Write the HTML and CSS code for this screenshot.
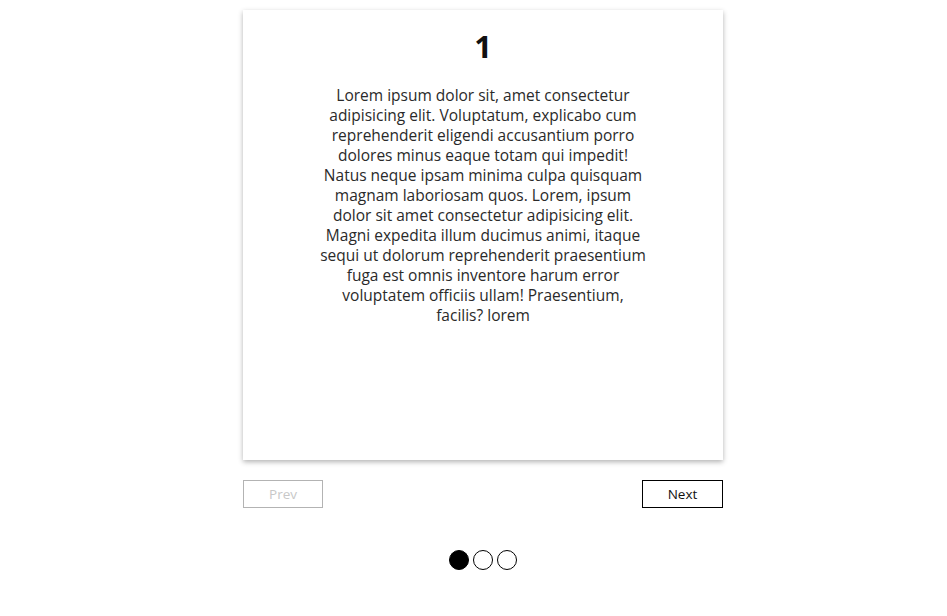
FILE: index.html
```html
<!DOCTYPE html>
<html>
<head>
<meta charset="utf-8">
<link rel="stylesheet" href="styles.css">
</head>
<body>
<div class="wrap">
  <div class="card">
    <h1 class="num">1</h1>
    <p class="text">Lorem ipsum dolor sit, amet consectetur adipisicing elit. Voluptatum, explicabo cum reprehenderit eligendi accusantium porro dolores minus eaque totam qui impedit! Natus neque ipsam minima culpa quisquam magnam laboriosam quos. Lorem, ipsum dolor sit amet consectetur adipisicing elit. Magni expedita illum ducimus animi, itaque sequi ut dolorum reprehenderit praesentium fuga est omnis inventore harum error voluptatem officiis ullam! Praesentium, facilis? lorem</p>
  </div>
  <div class="nav">
    <button class="btn btn-disabled">Prev</button>
    <button class="btn">Next</button>
  </div>
  <div class="dots">
    <span class="dot active"></span>
    <span class="dot"></span>
    <span class="dot"></span>
  </div>
</div>
</body>
</html>
```
FILE: styles.css
```css
html, body {
  margin: 0;
  padding: 0;
  background: #fff;
}
body {
  font-family: "Open Sans", "Noto Sans", sans-serif;
  color: #1a1a1a;
}
.wrap {
  width: 480px;
  margin: 10px 0 0 243px;
  display: flex;
  flex-direction: column;
}
.card {
  height: 450px;
  box-sizing: border-box;
  background: #fff;
  box-shadow: 0 2px 5px rgba(0,0,0,0.3);
  padding: 20px 75px 0;
  display: flex;
  flex-direction: column;
  align-items: center;
}
.num {
  margin: 0;
  font-size: 31px;
  line-height: 32px;
  font-weight: 700;
  color: #111;
}
.text {
  margin: 23px 0 0;
  font-size: 15.5px;
  line-height: 20px;
  text-align: center;
  color: #2a2a2a;
}
.nav {
  display: flex;
  justify-content: space-between;
  margin-top: 20px;
}
.btn {
  width: 81px;
  height: 28px;
  box-sizing: border-box;
  background: #fff;
  border: 1px solid #000;
  font-family: "Open Sans", "Noto Sans", sans-serif;
  font-size: 13.5px;
  color: #111;
  padding: 0;
}
.btn-disabled {
  width: 80px;
  border-color: #b3b3b3;
  color: #c8c8c8;
}
.dots {
  display: flex;
  justify-content: center;
  gap: 4px;
  margin-top: 42px;
}
.dot {
  width: 20px;
  height: 20px;
  box-sizing: border-box;
  border: 1px solid #000;
  border-radius: 50%;
  background: #fff;
}
.dot.active {
  background: #000;
}
```
